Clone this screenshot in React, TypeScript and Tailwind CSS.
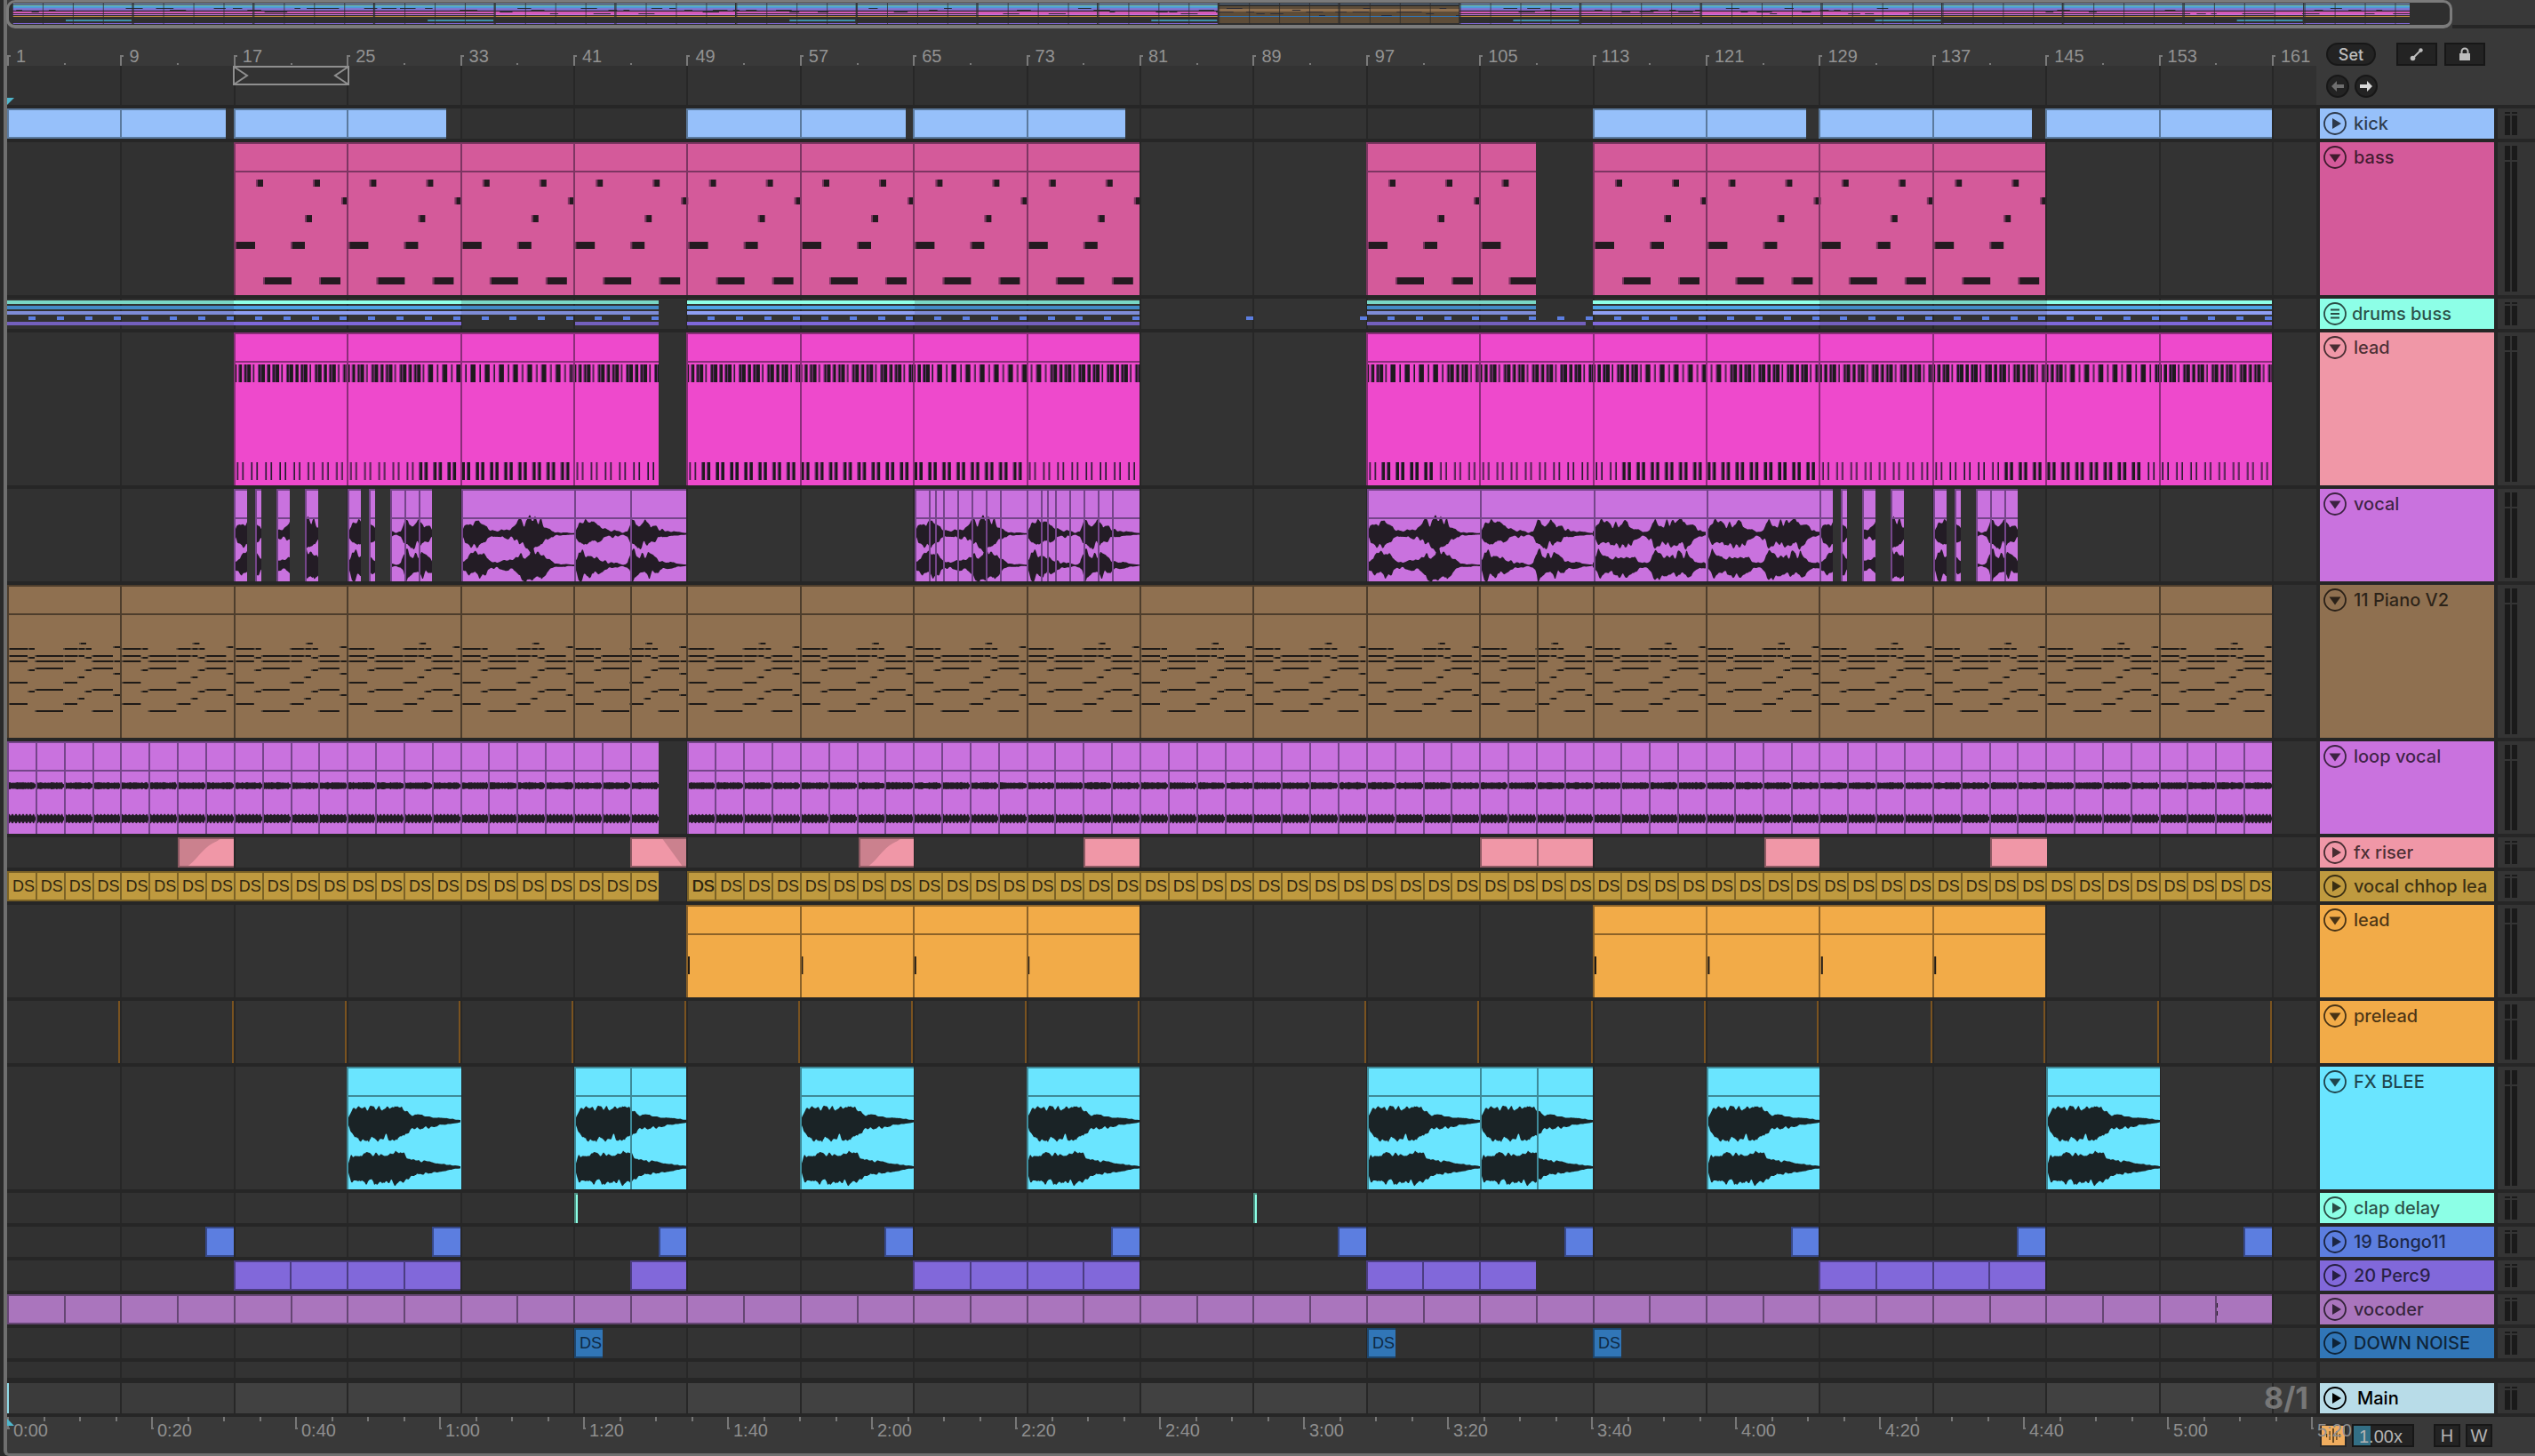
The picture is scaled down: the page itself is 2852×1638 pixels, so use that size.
import React from 'react';

const B = (b: number) => 8 + (b - 1) * 15.925;

type Env = [number, number][];
const ENV_A: Env = [[0,2],[4,10],[10,13],[20,14],[28,10],[34,5],[40,3],[50,6],[58,6],[65,15],[72,15],[80,21],[90,15],[98,7],[105,2],[127,1]];
const ENV_B: Env = [[0,2],[5,17],[12,14],[22,15],[30,8],[38,4],[46,4],[55,1],[60,3],[65,18],[75,15],[85,13],[95,7],[110,3],[127,1]];
const ENV_C: Env = [[0,3],[6,16],[14,13],[22,11],[30,14],[38,15],[46,9],[56,3],[62,5],[70,16],[78,13],[86,15],[95,15],[105,16],[115,8],[123,3],[127,3]];
const ENV_F: Env = [[0,2],[4,11],[12,14],[30,14],[45,13],[55,14],[64,12],[72,7],[85,6],[100,4],[127,1]];

function amp(env: Env, r: number) {
  for (let i = 1; i < env.length; i++) {
    if (r <= env[i][0]) {
      const [x0, a0] = env[i - 1];
      const [x1, a1] = env[i];
      return a0 + ((r - x0) / (x1 - x0)) * (a1 - a0);
    }
  }
  return env[env.length - 1][1];
}
const noise = (i: number, s: number) => {
  const v = Math.sin(i * 12.9898 + s * 78.233) * 43758.5453;
  return v - Math.floor(v);
};
const smooth = (x: number, s: number, p: number) => {
  const k = Math.floor(x / p);
  const f = x / p - k;
  const t = f * f * (3 - 2 * f);
  return noise(k, s) * (1 - t) + noise(k + 1, s) * t;
};
function phrase(start: number, env: Env, cy: number, up: number, down: number, seed: number, len = 127.5, rough = 0.85) {
  const top: string[] = [];
  const bot: string[] = [];
  const base = 1 - rough * 0.55;
  for (let i = 0; i <= len; i += 1) {
    const a = amp(env, i);
    const j1 = base + smooth(i, seed, 3.2) * rough + noise(i, seed + 3) * 0.1;
    const j2 = base + smooth(i + 40, seed + 1, 3.2) * rough + noise(i, seed + 5) * 0.1;
    top.push(`${(start + i).toFixed(1)} ${(cy - a * up * j1).toFixed(1)}`);
    bot.unshift(`${(start + i).toFixed(1)} ${(cy + a * down * j2).toFixed(1)}`);
  }
  return `M${top.join('L')}L${bot.join('L')}Z`;
}

const vocalPhr: [number, Env, number][] = [
  [263, ENV_A, 1], [391, ENV_B, 2], [519, ENV_A, 1], [646, ENV_B, 2], [1029, ENV_A, 1], [1155, ENV_B, 2],
  [1538, ENV_A, 1], [1665, ENV_B, 2], [1792, ENV_C, 3], [1920, ENV_C, 3], [2047, ENV_A, 1], [2175, ENV_B, 2],
];
const vocalWave = vocalPhr
  .map(([s, e, k]) => phrase(s, e, 50.5, 0.85, 0.85, k) + phrase(s, e, 86, 0.85, 0.85, k + 10))
  .join('');

const fxStarts = [391, 647, 901, 1155, 1538, 1665, 1921, 2303];
const fxWave = fxStarts
  .map((s) => phrase(s, ENV_F, 61, 1, 1.35, 7, 127.5, 0.45) + phrase(s, ENV_F, 113, 1.05, 1.25, 8, 127.5, 0.45))
  .join('');

function loopWave() {
  const t1: string[] = [], b1: string[] = [], t2: string[] = [], b2: string[] = [];
  for (let x = 8; x <= 2556; x += 1) {
    const r = (x - 8) % 31.85;
    const e = Math.min(1, Math.min(r, 31.85 - r) / 2 + 0.3);
    const a1 = e * (3 + noise(x, 4) * 1.2);
    const a2 = e * (3 + 2.4 * Math.abs(Math.sin((r * Math.PI) / 4)));
    t1.push(`${x} ${(884 - 834 - a1).toFixed(1)}`);
    b1.unshift(`${x} ${(884 - 834 + a1).toFixed(1)}`);
    t2.push(`${x} ${(921 - 834 - a2).toFixed(1)}`);
    b2.unshift(`${x} ${(921 - 834 + a2).toFixed(1)}`);
  }
  return `M${t1.join('L')}L${b1.join('L')}ZM${t2.join('L')}L${b2.join('L')}Z`;
}

type N = [number, number, number, number];
function notesPath(notes: N[], edge = 2) {
  const rect = (x: number, y: number, w: number, h: number) => `M${x.toFixed(1)} ${y}h${w}v${h}h${-w}z`;
  return {
    body: notes.map(([x, y, w, h]) => rect(x + edge, y, Math.max(w - edge, 0.5), h)).join(''),
    edge: edge > 0 ? notes.map(([x, y, , h]) => rect(x, y, edge, h)).join('') : '',
  };
}
const chunks = Array.from({ length: 21 }, (_, k) => B(1 + 8 * k));

const bassP: [number, number, number][] = [[24, 42, 8], [88, 42, 8], [120, 62, 8], [79, 82, 8], [0, 112, 23], [63, 112, 16], [32, 152, 32], [95, 152, 24]];
const bassNotes = notesPath(chunks.flatMap((c) => bassP.map(([r, y, w]) => [c + r + 1, y, w, 8] as N)));

const pianoP: [number, number, number][] = [
  [80, 65, 8], [118, 69, 8], [0, 71, 22], [22, 71, 8], [62, 71, 16], [78, 71, 8], [86, 71, 8],
  [0, 79, 22], [30, 79, 32], [62, 79, 16], [78, 79, 8], [94, 79, 24], [22, 81, 8], [86, 81, 8],
  [0, 85, 22], [30, 85, 32], [62, 85, 14], [94, 85, 24], [118, 85, 8], [30, 93, 32], [94, 93, 24],
  [22, 95, 8], [86, 95, 8], [118, 99, 8], [78, 103, 8], [0, 109, 22], [62, 109, 16], [30, 117, 32], [94, 117, 24],
  [22, 119, 8], [86, 119, 8], [118, 123, 8], [78, 127, 8], [0, 133, 22], [62, 133, 16], [30, 141, 32], [94, 141, 24],
];
const pianoNotes = notesPath(chunks.flatMap((c) => pianoP.map(([r, y, w]) => [c + r + 1, y, w, 2] as N)));

const inR = (x: number, rs: number[][]) => rs.some(([a, b]) => x >= a && x < b);
const sparseTop = [[450, 640], [1029, 1155], [1538, 1600], [1830, 1920], [2300, 2420]];
const denseBot = [[460, 640], [780, 1150], [1538, 1610], [1820, 2047], [2240, 2400]];
const leadN: N[] = [];
for (let x = 264 - 6; x < 2556; x += 31.85) {
  const s = inR(x, sparseTop);
  const g: [number, number][] = s
    ? [[0, 6], [10, 2], [16, 6], [26, 2]]
    : [[0, 3], [3, 5], [10, 4], [16, 3], [19, 5], [26, 2]];
  g.forEach(([r, w]) => leadN.push([x + r, 36, w, 20]));
}
for (let x = 264; x < 2556; x += 15.925) {
  const d = inR(x, denseBot);
  if (d) {
    leadN.push([x, 146, 4, 20], [x + 6, 146, 4, 20]);
  } else {
    leadN.push([x + 2, 146, 2, 20], [x + 8, 146, 2, 20]);
  }
}
const leadNotes = notesPath(leadN, 1);
const lead2Notes = notesPath(chunks.map((c) => [c + 2, 58, 2, 20] as N), 0);

const every = (step: number, from = 1, to = 161) => {
  const r: number[] = [];
  for (let b = from; b <= to; b += step) r.push(B(b));
  return r;
};
const bars8 = every(8, 9);

type ClipDef = { a: number; b: number; extra?: number[]; only?: number[]; fade?: 'in' | 'out' };
type PathDef = { d: string; fill: string };
type Track = {
  name: string;
  H: number;
  h: string;
  bg: string;
  head?: string;
  edge: string;
  icon: 'play' | 'down' | 'list';
  fold?: boolean;
  header?: boolean;
  clips: ClipDef[];
  paths?: PathDef[];
  ds?: string;
};

const chopA = (s: number): ClipDef[] => [
  { a: s, b: s + 15, only: [] }, { a: s + 23.5, b: s + 31, only: [] }, { a: s + 48, b: s + 63, only: [] }, { a: s + 79.5, b: s + 95, only: [] },
];
const chopB = (s: number): ClipDef[] => [
  { a: s, b: s + 15, only: [] }, { a: s + 23.5, b: s + 31, only: [] }, { a: s + 48, b: s + 95, only: [s + 64, s + 80] },
];

const tracks: Track[] = [
  { name: 'kick', H: 34, h: 'h-[34px]', bg: 'bg-[#96c0fa]', edge: 'bg-[#5b7a9e]', icon: 'play', fold: true,
    clips: [{ a: 8, b: 254 }, { a: B(17), b: 502 }, { a: B(49), b: 1019 }, { a: B(65), b: 1266 }, { a: B(113), b: 2032 }, { a: B(129), b: 2286 }, { a: B(145), b: B(161) }] },
  { name: 'bass', H: 172, h: 'h-[172px]', bg: 'bg-[#d45a9a]', edge: 'bg-[#7d3562]', icon: 'down', header: true,
    clips: [{ a: B(17), b: B(81) }, { a: B(97), b: 1728 }, { a: B(113), b: B(145) }],
    paths: [{ d: bassNotes.edge, fill: '#7d3562' }, { d: bassNotes.body, fill: '#241a20' }] },
  { name: 'drums buss', H: 34, h: 'h-[34px]', bg: 'bg-[#8dffe7]', edge: 'bg-[#5b7a9e]', icon: 'list', clips: [] },
  { name: 'lead', H: 172, h: 'h-[172px]', bg: 'bg-[#ee49cc]', head: 'bg-[#f097a7]', edge: 'bg-[#8a2d79]', icon: 'down', header: true,
    clips: [{ a: B(17), b: 741 }, { a: B(49), b: B(81) }, { a: B(97), b: B(161) }],
    paths: [{ d: leadNotes.edge, fill: '#6b2a78' }, { d: leadNotes.body, fill: '#1e1a1e' }] },
  { name: 'vocal', H: 104, h: 'h-[104px]', bg: 'bg-[#c972de]', edge: 'bg-[#75458a]', icon: 'down', header: true,
    clips: [
      ...chopA(263), ...chopB(391),
      { a: 519, b: 772, only: [646, 709] },
      { a: 1029, b: 1282, only: [1045, 1052, 1061, 1077, 1093, 1109, 1125, 1155, 1171, 1178, 1187, 1203, 1219, 1235, 1251] },
      { a: 1538, b: 2047, only: [1665, 1793, 1920] },
      ...chopA(2047), ...chopB(2175),
    ],
    paths: [{ d: vocalWave, fill: '#231c25' }] },
  { name: '11 Piano V2', H: 172, h: 'h-[172px]', bg: 'bg-[#8f7050]', edge: 'bg-[#4d3d2c]', icon: 'down', header: true,
    clips: [{ a: 8, b: B(161), extra: [709, 1729] }],
    paths: [{ d: pianoNotes.edge, fill: '#54473a' }, { d: pianoNotes.body, fill: '#1e1a17' }] },
  { name: 'loop vocal', H: 104, h: 'h-[104px]', bg: 'bg-[#c972de]', edge: 'bg-[#75458a]', icon: 'down', header: true,
    clips: [{ a: 8, b: 741, only: every(2, 3) }, { a: 773, b: B(161), only: every(2, 3) }],
    paths: [{ d: loopWave(), fill: '#231c25' }] },
  { name: 'fx riser', H: 34, h: 'h-[34px]', bg: 'bg-[#f097a7]', edge: 'bg-[#8d5a63]', icon: 'play', fold: true,
    clips: [{ a: 200, b: 263, fade: 'in' }, { a: 709, b: 772, fade: 'out' }, { a: 966, b: 1028, fade: 'in' }, { a: 1219, b: 1282 }, { a: 1665, b: 1792, extra: [1729] }, { a: 1985, b: 2047 }, { a: 2239, b: 2303 }] },
  { name: 'vocal chhop lea', H: 34, h: 'h-[34px]', bg: 'bg-[#bf9a3f]', edge: 'bg-[#7b6226]', icon: 'play', fold: true, ds: 'text-[#2e2510]',
    clips: [{ a: 8, b: 741, only: every(2, 3) }, { a: 773, b: B(161), only: every(2, 3) }] },
  { name: 'lead', H: 104, h: 'h-[104px]', bg: 'bg-[#f2ab48]', edge: 'bg-[#8c6228]', icon: 'down', header: true,
    clips: [{ a: B(49), b: B(81) }, { a: B(113), b: B(145) }],
    paths: [{ d: lead2Notes.body, fill: '#1e1a17' }] },
  { name: 'prelead', H: 70, h: 'h-[70px]', bg: 'bg-[#f2ab48]', edge: 'bg-[#7a5320]', icon: 'down',
    clips: every(8, 9).filter((x) => Math.abs(x - B(89)) > 2).map((x) => ({ a: x - 2, b: x, only: [] })) },
  { name: 'FX BLEE', H: 138, h: 'h-[138px]', bg: 'bg-[#6ae5ff]', edge: 'bg-[#3e8a99]', icon: 'down', header: true,
    clips: [{ a: 390, b: 519 }, { a: 646, b: 772, only: [709] }, { a: 900, b: 1028 }, { a: 1155, b: 1282 }, { a: 1538, b: 1792, only: [1665, 1729] }, { a: 1920, b: 2047 }, { a: 2302, b: 2430 }],
    paths: [{ d: fxWave, fill: '#1a2326' }] },
  { name: 'clap delay', H: 34, h: 'h-[34px]', bg: 'bg-[#8cffe6]', edge: 'bg-[#4f8f82]', icon: 'play',
    clips: [{ a: 646, b: 650, only: [] }, { a: 1410, b: 1414, only: [] }] },
  { name: '19 Bongo11', H: 34, h: 'h-[34px]', bg: 'bg-[#5c7ee0]', edge: 'bg-[#37498a]', icon: 'play', fold: true,
    clips: Array.from({ length: 10 }, (_, i) => ({ a: B(15 + i * 16), b: B(17 + i * 16), only: [] as number[] })) },
  { name: '20 Perc9', H: 34, h: 'h-[34px]', bg: 'bg-[#8168da]', edge: 'bg-[#4b3d82]', icon: 'play', fold: true,
    clips: [{ a: B(17), b: B(33), only: every(4, 21, 29) }, { a: 709, b: B(49), only: [] }, { a: B(65), b: B(81), only: every(4, 69, 77) }, { a: B(97), b: 1728, only: every(4, 101, 105) }, { a: B(129), b: B(145), only: every(4, 133, 141) }] },
  { name: 'vocoder', H: 34, h: 'h-[34px]', bg: 'bg-[#aa75bd]', edge: 'bg-[#654673]', icon: 'play', fold: true,
    clips: [{ a: 8, b: B(161), only: every(4, 5) }],
    paths: [{ d: 'M2493 10h2v5h-1v4h1v5h-2z', fill: '#231c25' }] },
  { name: 'DOWN NOISE', H: 34, h: 'h-[34px]', bg: 'bg-[#3176b7]', edge: 'bg-[#1d466e]', icon: 'play', fold: true, ds: 'text-[#0f2a45]',
    clips: [{ a: 646, b: 678, only: [] }, { a: 1538, b: 1570, only: [] }, { a: 1792, b: 1824, only: [] }] },
];

function Icon({ kind }: { kind: 'play' | 'down' | 'list' }) {
  return (
    <svg width="26" height="26" viewBox="0 0 26 26" className="shrink-0">
      <circle cx="13" cy="13" r="12" fill="none" stroke="currentColor" strokeWidth="1.8" />
      {kind === 'play' && <polygon points="10,7 20,13 10,19" fill="currentColor" />}
      {kind === 'down' && <polygon points="6.5,9.5 19.5,9.5 13,18.5" fill="currentColor" />}
      {kind === 'list' && (
        <g fill="currentColor">
          <rect x="8" y="7.5" width="10" height="2" />
          <rect x="8" y="12" width="10" height="2" />
          <rect x="8" y="16.5" width="10" height="2" />
        </g>
      )}
    </svg>
  );
}

function Meter({ tall }: { tall: boolean }) {
  const seg = tall ? 'h-[16px]' : 'h-[2px]';
  const col = (
    <div className="flex flex-col gap-[2px] w-[6px] h-full">
      <div className={`${seg} bg-[#1a1a1a]`} />
      <div className="flex-1 bg-[#1a1a1a]" />
    </div>
  );
  return (
    <div className="flex-1 bg-[#343434] pl-[8px] pt-[4px] pb-[4px] flex gap-[2px]">
      {col}
      {col}
    </div>
  );
}

function Grid({ bright }: { bright?: boolean }) {
  const shades = [17, 49, 81, 113, 145];
  return (
    <>
      {shades.map((b) => (
        <div
          key={b}
          className={`absolute top-0 bottom-0 ${bright ? 'bg-white/[0.03]' : 'bg-white/[0.012]'}`}
          style={{ left: B(b) - 8, width: 15.925 * 16 }}
        />
      ))}
      {bars8.map((x) => (
        <div key={x} className="absolute top-0 bottom-0 w-[2px] bg-[#272727]" style={{ left: x - 8 }} />
      ))}
    </>
  );
}

function Clip({ c, t }: { c: ClipDef; t: Track }) {
  const w = c.b - c.a;
  const lines = c.only ?? bars8.filter((x) => x > c.a + 4 && x < c.b - 4).concat(c.extra ?? []);
  const cells = t.ds ? [c.a, ...lines] : [];
  return (
    <div className={`absolute top-0 bottom-0 overflow-hidden ${t.bg}`} style={{ left: c.a - 8, width: w }}>
      {c.fade && (
        <svg className="absolute inset-0" width={w} height={t.H} viewBox={`0 0 ${w} ${t.H}`}>
          <rect width={w} height={t.H} fill="#cb818e" />
          {c.fade === 'in' ? (
            <path d={`M${w * 0.14} ${t.H} C${w * 0.3} ${t.H * 0.85} ${w * 0.45} ${t.H * 0.35} ${w * 0.62} ${t.H * 0.2} S${w * 0.72} 2 ${w * 0.8} 2 L${w} 2 L${w} ${t.H} Z`} fill="#f097a7" />
          ) : (
            <path d={`M0 2 L${w * 0.58} 2 L${w * 0.95} ${t.H} L0 ${t.H} Z`} fill="#f097a7" />
          )}
        </svg>
      )}
      {t.paths && (
        <svg className="absolute inset-0" width={w} height={t.H} viewBox={`${c.a} 0 ${w} ${t.H}`}>
          {t.paths.map((p, i) => (
            <path key={i} d={p.d} fill={p.fill} />
          ))}
        </svg>
      )}
      {cells.map((x) => (
        <span
          key={x}
          className={`absolute top-[6px] text-[18px] leading-[22px] font-['Liberation_Sans',sans-serif] ${t.ds}`}
          style={{ left: x - c.a + 6 }}
        >
          DS
        </span>
      ))}
      {lines.map((x) => (
        <div key={x} className={`absolute top-0 bottom-0 w-[2px] ${t.edge}`} style={{ left: x - c.a }} />
      ))}
      <div className={`absolute top-0 left-0 right-0 h-[2px] ${t.edge}`} />
      <div className={`absolute top-0 bottom-0 left-0 w-[2px] ${t.edge}`} />
      {t.fold && <div className={`absolute bottom-0 left-0 right-0 h-[2px] ${t.edge}`} />}
      {t.header && <div className={`absolute top-[32px] left-0 right-0 h-[2px] ${t.edge}`} />}
    </div>
  );
}

function DrumBands() {
  const bright = [[263, 519], [773, 1029], [1792, 2047], [2303, 2556]];
  const bands = [
    { top: 'top-[2px]', hi: 'bg-[#8dffe7]', lo: 'bg-[#78d6c4]', r: [[8, 741], [773, 1282], [1538, 1728], [1792, 2556]] },
    { top: 'top-[8px]', hi: 'bg-[#4fa2e6]', lo: 'bg-[#4389c6]', r: [[8, 741], [773, 1282], [1538, 1728], [1792, 2556]] },
    { top: 'top-[14px]', hi: 'bg-[#8f9ff2]', lo: 'bg-[#7e8cd6]', r: [[8, 741], [773, 1282], [1538, 1728], [1792, 2556]] },
    { top: 'top-[26px]', hi: 'bg-[#7f68da]', lo: 'bg-[#7360bd]', r: [[8, 519], [647, 741], [773, 1282], [1538, 1784], [1792, 2556]] },
  ];
  const pieces = (r: number[][]) => {
    const out: { a: number; b: number; on: boolean }[] = [];
    r.forEach(([a, b]) => {
      const cuts = new Set([a, b]);
      bright.forEach(([p, q]) => {
        if (p > a && p < b) cuts.add(p);
        if (q > a && q < b) cuts.add(q);
      });
      const pts = [...cuts].sort((m, n) => m - n);
      for (let i = 0; i < pts.length - 1; i++) {
        out.push({ a: pts[i], b: pts[i + 1], on: inR(pts[i] + 1, bright) });
      }
    });
    return out;
  };
  const squares: number[] = [];
  for (let x = 32; x < 2556; x += 31.85) {
    if ((x < 741 || x > 773) && (x < 1282 || x > 1538) && (x < 1784 || x > 1792)) squares.push(x);
  }
  squares.push(1402, 1530);
  return (
    <>
      {bands.map((bd, i) =>
        pieces(bd.r).map((p) => (
          <div key={`${i}-${p.a}`} className={`absolute h-[4px] ${bd.top} ${p.on ? bd.hi : bd.lo}`} style={{ left: p.a - 8, width: p.b - p.a }} />
        ))
      )}
      {squares.map((x) => (
        <div key={x} className="absolute top-[20px] h-[4px] w-[8px] bg-[#5c7ee0]" style={{ left: x - 8 }} />
      ))}
    </>
  );
}

function Row({ t }: { t: Track }) {
  return (
    <div className={`flex gap-[4px] ${t.h}`}>
      <div className="relative w-[2598px] h-full bg-[#313131] overflow-hidden">
        <Grid />
        {t.name === 'drums buss' && <DrumBands />}
        {t.clips.map((c, i) => (
          <Clip key={i} c={c} t={t} />
        ))}
      </div>
      <div className={`w-[196px] h-full ${t.head ?? t.bg}`}>
        <div className="h-[34px] flex items-center pl-[4px] gap-[8px] text-black/70">
          <Icon kind={t.icon} />
          <span className={`text-[20px] font-medium whitespace-nowrap overflow-hidden ${t.icon === 'list' ? '-ml-[2px]' : ''}`}>{t.name}</span>
        </div>
      </div>
      <Meter tall={t.H > 34} />
    </div>
  );
}

function Minimap() {
  const W = 2700;
  const secs = Array.from({ length: 20 }, (_, i) => i);
  const brown = (i: number) => i === 10 || i === 11;
  const pink = (i: number) => [4, 5, 8, 9, 14, 15, 18, 19].includes(i);
  const dash: { x: number; y: number; w: number }[] = [];
  for (let i = 0; i < 160; i++) {
    dash.push({ x: i * 17 + 4 + noise(i, 2) * 8, y: 6 + Math.floor(noise(i, 3) * 5) * 2, w: 6 + noise(i, 5) * 14 });
  }
  return (
    <svg width={W} height="25" viewBox={`-3 0 ${W} 25`} className="block">
      {secs.map((i) => {
        const x = i * 135.7;
        const w = 134.5;
        if (brown(i))
          return (
            <g key={i}>
              <rect x={x} y={1} width={w} height={1} fill="#96c0fa" opacity=".5" />
              <rect x={x} y={4} width={w} height={19} fill="#5d4c38" />
              <rect x={x} y={7} width={w} height={3} fill="#8f7050" />
              <rect x={x} y={15} width={w} height={1} fill="#3176b7" />
            </g>
          );
        return (
          <g key={i}>
            <rect x={x} y={1} width={w} height={1} fill="#96c0fa" />
            <rect x={x} y={3} width={w} height={1} fill="#7ad6cf" />
            <rect x={x} y={4} width={w} height={2} fill="#4f9bd6" />
            <rect x={x} y={6} width={w} height={2} fill="#7d78d0" />
            <rect x={x} y={8} width={w} height={1} fill="#7a55b0" />
            <rect x={x} y={10} width={w} height={pink(i) ? 3 : 2} fill="#d45ab8" />
            <rect x={x} y={13} width={w} height={1} fill="#c972de" />
            <rect x={x} y={15} width={w} height={1} fill="#c08a3f" />
            {i % 3 === 0 && <rect x={x + 60} y={19} width={74} height={2} fill="#3f8fa8" />}
            <rect x={x} y={23} width={w} height={1} fill="#8168da" />
          </g>
        );
      })}
      {dash.map((d, i) => (
        <rect key={i} x={d.x} y={d.y} width={d.w} height={1} fill="#2c2c35" />
      ))}
      {Array.from({ length: 80 }, (_, i) => (
        <rect key={i} x={i * 33.93} y={0} width={1} height={25} fill="#2c2c2c" opacity=".75" />
      ))}
    </svg>
  );
}

const BTN = "border-2 border-[#171717] bg-[#232323] flex items-center justify-center";

export default function App() {
  const topBars = every(8, 1);
  const halfs = every(8, 5);
  const secTicks = Array.from({ length: 65 }, (_, i) => i);
  return (
    <div className="w-[2852px] h-[1638px] bg-[#2a2a2a] pl-[4px] overflow-hidden font-['Inter','Liberation_Sans',sans-serif]">
      <div className="h-full border-l-4 border-b-[3px] border-[#6f6f6f] rounded-bl-[6px] flex flex-col bg-[#393939]">
        {/* overview strip */}
        <div className="h-[32px] flex">
          <div className="w-[2752px] h-full border-[3px] border-b-4 border-[#7b7b7b] rounded-[10px] -ml-[1px] bg-[#2f2f2f] overflow-hidden pl-[1px]">
            <Minimap />
          </div>
          <div className="flex-1 border-b-4 border-[#262626]" />
        </div>

        {/* ruler + scene area */}
        <div className="flex h-[86px]">
          <div className="w-[2598px] flex flex-col">
            <div className="relative h-[42px] font-['Liberation_Sans',sans-serif] text-[#929292] text-[20px] leading-[20px]">
              {topBars.map((x, i) => (
                <React.Fragment key={x}>
                  <div className="absolute top-[30px] h-[12px] w-[2px] bg-[#7a7a7a]" style={{ left: x - 8 }} />
                  <div className="absolute top-[30px] h-[2px] w-[4px] bg-[#7a7a7a]" style={{ left: x - 8 }} />
                  <span className="absolute top-[21px]" style={{ left: x + 2 }}>
                    {1 + 8 * i}
                  </span>
                </React.Fragment>
              ))}
              {halfs.map((x) => (
                <div key={x} className="absolute top-[39px] h-[2px] w-[2px] bg-[#7a7a7a]" style={{ left: x - 8 }} />
              ))}
            </div>
            <div className="relative h-[44px] bg-[#313131] overflow-hidden">
              <Grid />
              <svg className="absolute top-0" style={{ left: B(17) - 9 }} width="131" height="22" viewBox="0 0 131 22">
                <path d="M1 1H130V21H1ZM1 1L16 11L1 21M130 1L115 11L130 21" fill="none" stroke="#8f8f8f" strokeWidth="2" />
              </svg>
              <svg className="absolute left-0 top-[36px]" width="8" height="8" viewBox="0 0 8 8">
                <polygon points="0,0 8,0 0,8" fill="#4fb6cc" />
              </svg>
            </div>
          </div>
          <div className="flex-1 pt-[16px] pl-[11px]">
            <div className="flex items-center h-[26px]">
              <div className="w-[56px] h-[26px] rounded-full border-2 border-[#171717] bg-[#232323] text-[#bdbdbd] text-[18px] font-medium flex items-center justify-center">Set</div>
              <div className={`w-[46px] h-[26px] ml-[23px] ${BTN}`}>
                <svg width="16" height="16" viewBox="0 0 16 16">
                  <path d="M4 12L12 4" stroke="#bdbdbd" strokeWidth="2" />
                  <circle cx="3.5" cy="12.5" r="2.8" fill="#bdbdbd" />
                  <circle cx="12.5" cy="3.5" r="2.2" fill="#bdbdbd" />
                </svg>
              </div>
              <div className={`w-[46px] h-[26px] ml-[8px] ${BTN}`}>
                <svg width="16" height="16" viewBox="0 0 16 16">
                  <path d="M4.5 7V5a3.5 3.5 0 0 1 7 0v2" fill="none" stroke="#bdbdbd" strokeWidth="2" />
                  <rect x="2" y="7" width="12" height="8" fill="#bdbdbd" />
                </svg>
              </div>
            </div>
            <div className="flex gap-[6px] mt-[10px]">
              <div className="w-[26px] h-[26px] rounded-full border-2 border-[#171717] bg-[#232323] flex items-center justify-center">
                <svg width="14" height="12" viewBox="0 0 14 12"><path d="M0 6L6 0V4H14V8H6V12Z" fill="#6f6f6f" /></svg>
              </div>
              <div className="w-[26px] h-[26px] rounded-full border-2 border-[#171717] bg-[#232323] flex items-center justify-center">
                <svg width="14" height="12" viewBox="0 0 14 12"><path d="M14 6L8 0V4H0V8H8V12Z" fill="#d8d8d8" /></svg>
              </div>
            </div>
          </div>
        </div>

        {/* tracks */}
        <div className="flex flex-col gap-[4px] bg-[#262626] pt-[4px] pb-[4px]">
          {tracks.map((t, i) => (
            <Row key={i} t={t} />
          ))}
          <div className="flex gap-[4px] h-[18px]">
            <div className="relative w-[2598px] bg-[#313131] overflow-hidden">
              <Grid />
            </div>
            <div className="flex-1 bg-[#343434]" />
          </div>
          <div className="flex gap-[4px] h-[34px] mt-[2px]">
            <div className="relative w-[2598px] bg-[#3b3b3b] overflow-hidden">
              <Grid bright />
              <div className="absolute left-0 top-0 bottom-0 w-[2px] bg-[#8fdbe8]" />
              <span className="absolute right-[9px] top-[-4px] text-[34px] leading-[42px] font-bold text-[#777777]">8/1</span>
            </div>
            <div className="w-[196px] bg-[#b8dce8] h-full flex items-center pl-[4px] text-black">
              <Icon kind="play" />
              <span className="text-[20px] font-medium ml-[12px]">Main</span>
            </div>
            <Meter tall={false} />
          </div>
        </div>

        {/* time ruler */}
        <div className="flex flex-1">
          <div className="relative w-[2598px] font-['Liberation_Sans',sans-serif] text-[20px] leading-[20px] text-[#8e8e8e]">
            {secTicks.map((i) =>
              i % 4 === 0 ? (
                <React.Fragment key={i}>
                  <div className="absolute top-0 h-[14px] w-[2px] bg-[#777777]" style={{ left: i * 40.5 }} />
                  <div className="absolute top-[12px] h-[2px] w-[3px] bg-[#777777]" style={{ left: i * 40.5 }} />
                  <span className="absolute top-[5px]" style={{ left: i * 40.5 + 7 }}>
                    {`${Math.floor((i / 4) * 20 / 60)}:${String(((i / 4) * 20) % 60).padStart(2, '0')}`}
                  </span>
                </React.Fragment>
              ) : (
                <div key={i} className="absolute top-0 h-[5px] w-[2px] bg-[#777777]" style={{ left: i * 40.5 }} />
              )
            )}
            <svg className="absolute left-0 top-[2px]" width="8" height="8" viewBox="0 0 8 8">
              <polygon points="0,0 8,8 0,8" fill="#4fb6cc" />
            </svg>
          </div>
          <div className="flex-1 flex items-start pt-[8px] pl-[4px]">
            <div className="w-[30px] h-[26px] bg-[#f0ad5e] border-2 border-[#2a2a2a] flex items-center justify-center">
              <svg width="18" height="16" viewBox="0 0 18 16" fill="#4a3618">
                <rect x="1" y="6" width="1.2" height="4" />
                <rect x="4.5" y="3" width="1.2" height="10" />
                <rect x="8.2" y="0" width="1.6" height="16" />
                <rect x="12.3" y="3" width="1.2" height="10" />
                <rect x="15.8" y="6" width="1.2" height="4" />
              </svg>
            </div>
            <div className="relative w-[70px] h-[26px] ml-[6px] border-2 border-[#171717] bg-[#232323] overflow-hidden">
              <div className="absolute left-0 top-0 bottom-0 w-[19px] bg-[#336f85]" />
              <span className="absolute left-[6px] top-0 text-[20px] leading-[24px] text-[#b4b4b4] font-['Liberation_Sans',sans-serif]">1.00x</span>
            </div>
            <div className={`w-[30px] h-[26px] ml-[22px] text-[#b4b4b4] text-[20px] font-['Liberation_Sans',sans-serif] ${BTN}`}>H</div>
            <div className={`w-[30px] h-[26px] ml-[6px] text-[#b4b4b4] text-[20px] font-['Liberation_Sans',sans-serif] ${BTN}`}>W</div>
          </div>
        </div>
      </div>
    </div>
  );
}
